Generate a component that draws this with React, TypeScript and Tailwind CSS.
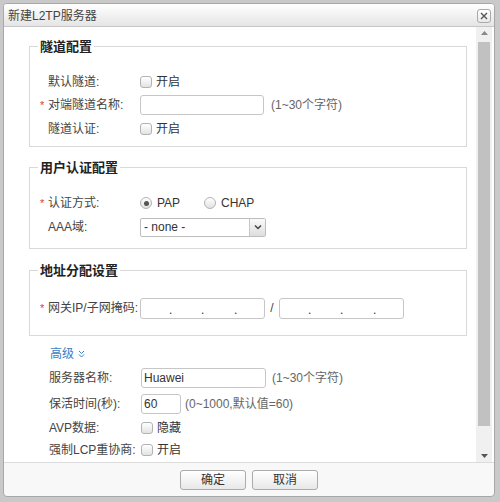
import React from "react";

const FONT = { fontFamily: '"Liberation Sans", "Noto Sans CJK SC", sans-serif' };

function Checkbox({ label }: { label: string }) {
  return (
    <div className="flex items-center gap-[4px]">
      <span className="w-[12px] h-[12px] rounded-[3px] border border-[#b3b3b3] bg-gradient-to-b from-white to-[#e3e3e3]" />
      <span className="text-[#333]">{label}</span>
    </div>
  );
}

function Radio({ label, checked }: { label: string; checked?: boolean }) {
  return (
    <div className="flex items-center gap-[5px]">
      <span className="w-[12px] h-[12px] rounded-full border border-[#b3b3b3] bg-gradient-to-b from-white to-[#e1e1e1] flex items-center justify-center">
        {checked && <span className="w-[5px] h-[5px] rounded-full bg-[#555]" />}
      </span>
      <span className="text-[#333]">{label}</span>
    </div>
  );
}

function Row({
  label,
  required,
  h,
  children,
}: {
  label: string;
  required?: boolean;
  h: string;
  children?: React.ReactNode;
}) {
  return (
    <div className={`flex items-center ${h}`}>
      <span className="w-[8px] text-[#e4393c] text-[11px] leading-none">{required ? "*" : ""}</span>
      <span className="w-[92px] text-[#444]">{label}</span>
      {children}
    </div>
  );
}

function IpBox() {
  return (
    <div className="w-[125px] h-[21px] rounded-[3px] border border-[#c6c6c6] bg-white flex items-end pb-[2px] pl-[28px]">
      <span className="w-[32px] leading-none text-[#333]">.</span>
      <span className="w-[33px] leading-none text-[#333]">.</span>
      <span className="leading-none text-[#333]">.</span>
    </div>
  );
}

function Legend({ children }: { children: React.ReactNode }) {
  return (
    <legend className="-ml-[2px] px-[2px] text-[13px] leading-[17px] font-bold text-[#222]">{children}</legend>
  );
}

export default function App() {
  return (
    <div
      className="w-[500px] h-[502px] bg-[#c9c9c9] pt-[3px] pl-[3px] pr-[5px] pb-[5px] text-[12px]"
      style={FONT}
    >
      <div className="h-full flex flex-col rounded-[4px] border border-[#a8a8a8] bg-[#f8f8f8] overflow-hidden">
        {/* Title bar */}
        <div className="h-[23px] shrink-0 flex items-center justify-between pl-[4px] pr-[3px] pt-[1px] bg-gradient-to-b from-white to-[#e5e5e5] border-b border-[#c6c6c6]">
          <span className="text-[#444] text-[12px]">新建L2TP服务器</span>
          <span className="w-[14px] h-[14px] rounded-[3px] border border-[#a9a9a9] bg-gradient-to-b from-white to-[#e9e9e9] flex items-center justify-center">
            <svg width="8" height="8" viewBox="0 0 8 8">
              <path d="M1 1L7 7M7 1L1 7" stroke="#555" strokeWidth="1.4" />
            </svg>
          </span>
        </div>

        {/* Body */}
        <div className="h-[436px] shrink-0 flex bg-white border-b border-[#dcdcdc]">
          <div className="flex-1 overflow-hidden pt-[11px] pl-[25px] pr-[9px]">
            <fieldset className="border border-[#d9d9d9] pt-[16px] pb-[5px] pl-[10px]">
              <Legend>隧道配置</Legend>
              <Row label="默认隧道:" h="h-[22px]">
                <Checkbox label="开启" />
              </Row>
              <Row label="对端隧道名称:" required h="h-[24px]">
                <div className="w-[124px] h-[20px] rounded-[3px] border border-[#c6c6c6] bg-white" />
                <span className="ml-[7px] text-[#666]">(1~30个字符)</span>
              </Row>
              <Row label="隧道认证:" h="h-[24px]">
                <Checkbox label="开启" />
              </Row>
            </fieldset>

            <fieldset className="mt-[12px] border border-[#d9d9d9] pt-[15px] pb-[9px] pl-[10px]">
              <Legend>用户认证配置</Legend>
              <Row label="认证方式:" required h="h-[24px]">
                <div className="w-[64px]">
                  <Radio label="PAP" checked />
                </div>
                <Radio label="CHAP" />
              </Row>
              <Row label="AAA域:" h="h-[24px]">
                <div className="w-[126px] h-[19px] rounded-[2px] border border-[#bdbdbd] bg-white flex">
                  <span className="flex-1 pl-[3px] leading-[17px] text-[#333]">- none -</span>
                  <span className="w-[16px] border-l border-[#c6c6c6] bg-gradient-to-b from-[#fafafa] to-[#dedede] flex items-center justify-center">
                    <svg width="8" height="6" viewBox="0 0 8 6">
                      <path d="M1 1.5L4 4.5L7 1.5" stroke="#444" strokeWidth="1.5" fill="none" />
                    </svg>
                  </span>
                </div>
              </Row>
            </fieldset>

            <fieldset className="mt-[13px] border border-[#d9d9d9] pt-[17px] pb-[15px] pl-[10px]">
              <Legend>地址分配设置</Legend>
              <Row label="网关IP/子网掩码:" required h="h-[24px]">
                <IpBox />
                <span className="w-[14px] text-center text-[#444]">/</span>
                <IpBox />
              </Row>
            </fieldset>

            <div className="mt-[9px] h-[18px] pl-[21px] flex items-center gap-[4px] text-[#3a7cc5]">
              <span>高级</span>
              <svg width="7" height="8" viewBox="0 0 7 8">
                <path d="M1 1L3.5 3.5L6 1M1 4.5L3.5 7L6 4.5" stroke="#3a7cc5" strokeWidth="1" fill="none" />
              </svg>
            </div>
            <div className="pl-[12px] pt-[1px]">
              <Row label="服务器名称:" h="h-[27px]">
                <div className="w-[125px] h-[20px] rounded-[3px] border border-[#c6c6c6] bg-white pl-[2px] leading-[18px] text-[#333]">
                  Huawei
                </div>
                <span className="ml-[6px] text-[#666]">(1~30个字符)</span>
              </Row>
              <Row label="保活时间(秒):" h="h-[26px]">
                <div className="w-[40px] h-[20px] rounded-[3px] border border-[#c6c6c6] bg-white pl-[2px] leading-[18px] text-[#333]">
                  60
                </div>
                <span className="ml-[4px] text-[#666]">(0~1000,默认值=60)</span>
              </Row>
              <Row label="AVP数据:" h="h-[22px]">
                <Checkbox label="隐藏" />
              </Row>
              <Row label="强制LCP重协商:" h="h-[22px]">
                <Checkbox label="开启" />
              </Row>
            </div>
          </div>

          {/* Scrollbar */}
          <div className="w-[16px] shrink-0 bg-[#f0f0f0] flex flex-col items-center pt-[3px] pb-[4px] mr-[2px]">
            <svg width="7" height="4" viewBox="0 0 7 4" className="mt-[1px]">
              <path d="M0 4L3.5 0L7 4Z" fill="#888" />
            </svg>
            <div className="mt-[7px] w-[12px] h-[384px] bg-[#c1c1c1]" />
            <div className="flex-1" />
            <svg width="7" height="4" viewBox="0 0 7 4">
              <path d="M0 0L3.5 4L7 0Z" fill="#555" />
            </svg>
          </div>
        </div>

        {/* Footer */}
        <div className="flex-1 flex items-center justify-center gap-[6px]">
          <button className="w-[66px] h-[20px] rounded-[3px] border border-[#ababab] bg-gradient-to-b from-white to-[#e8e8e8] text-[#333] text-[12px]">
            确定
          </button>
          <button className="w-[66px] h-[20px] rounded-[3px] border border-[#ababab] bg-gradient-to-b from-white to-[#e8e8e8] text-[#333] text-[12px]">
            取消
          </button>
        </div>
      </div>
    </div>
  );
}
